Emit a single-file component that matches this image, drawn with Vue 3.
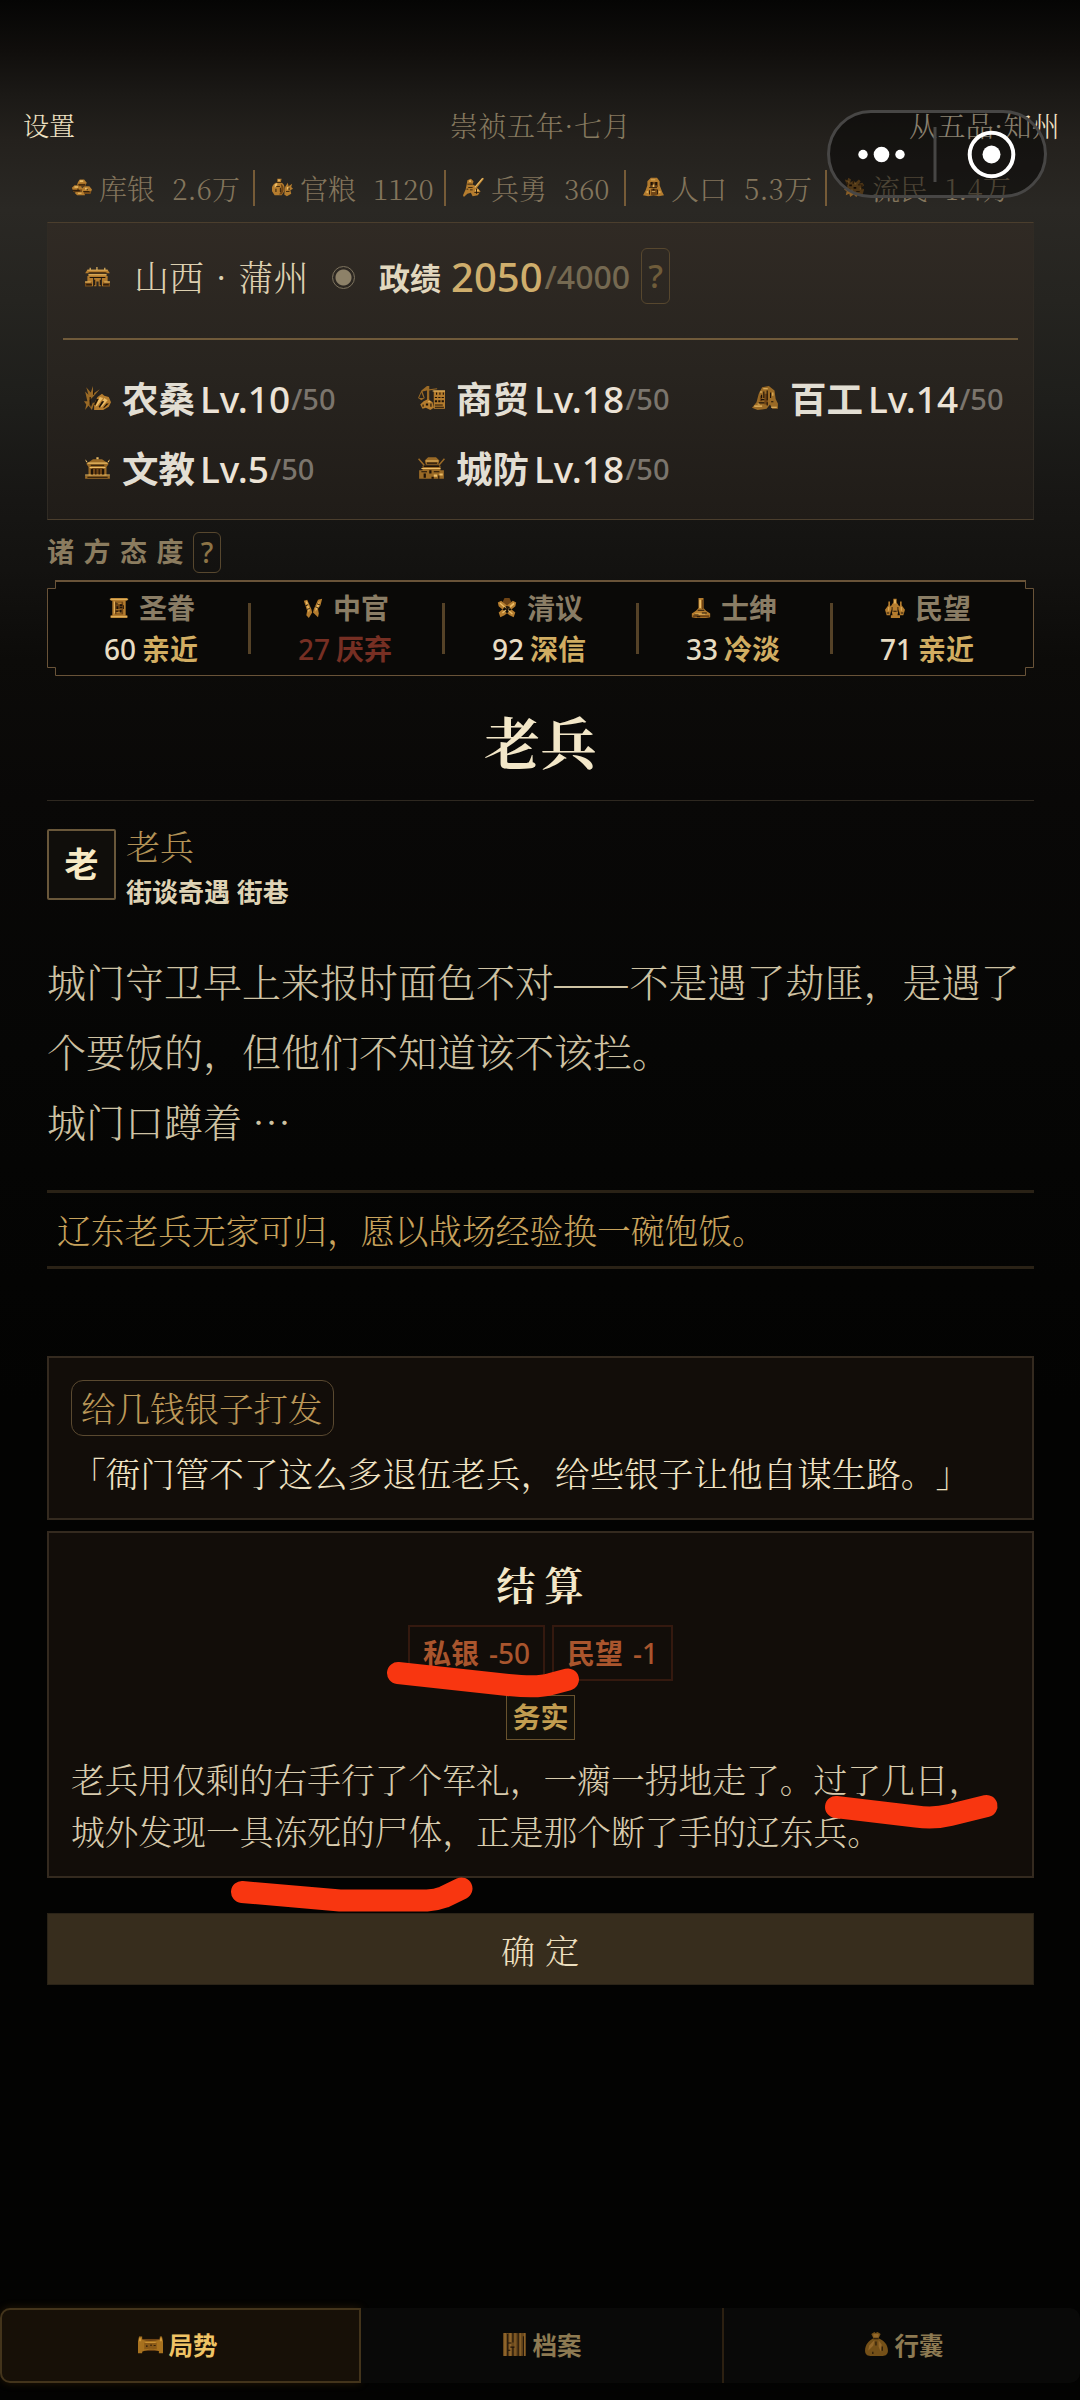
<script setup>
import { h } from 'vue'

const G = '#b47c2e'
const H = '#ecbd66'
const D = '#6f4415'
const K = '#1c1208'

// Each icon is a stack of [fill, path] layers on a 24x24 grid.
const shapes = {
  silver: [[G, 'M8 6 10 3h5l3 4-2 4H9L7 9zM1 13l3-3h7l2 4-2 4H3zM13 13l3-2h5l3 4-2 5h-7l-3-3zM4 19l4-2 7 1 1 4H7z'], [D, 'M9 8h8l-1 3H9zM2 15h11l-2 3H3zM14 17h9l-1 3h-7z'], [H, 'M10 4h4v2h-4zM4 11h4v2H4zM16 13h3v2h-3zM8 19h4v1H8z'], [K, 'M8 9h8v1H8zM2 16h8v1H2zM14 17h7v1h-7zM18 14h1v2h-1zM7 14h2v1H7z']],
  grain: [[G, 'M6 2h5l-1 4c4 2 5 6 4 11l-3 5H3l-3-5c-1-5 1-9 6-11zM15 12l3-5 1 4 4-3-1 4 2 2-3 2 1 4-5 3-3-2z'], [D, 'M10 8c3 2 4 5 3 9l-2 4H8c3-4 3-8 2-13z'], [H, 'M3 9l3-2v3l-3 3zM17 12h2v3h-2zM7 3h2v2H7z'], [K, 'M5 6h6v1H5zM5 11h4v1H5zM4 14h1v4H4zM9 13h1v5H9zM16 17h4v1h-4zM19 13h1v3h-1z']],
  soldier: [[G, 'M5 4l4-2 3 3-1 4 4 2 8-10 1 1-8 11 4 4-3 5-6 1-2-4-4 1-4 4-1-2 3-7 1-5z'], [H, 'M7 4h2v2H7zM22 1l1 1-9 11-1-1zM14 15h4v2h-4z'], [K, 'M5 8h6v1H5zM6 12h5v1H6zM13 18h6v1h-6zM15 14h1v6h-1zM8 15h3v1H8zM4 14h2v1H4z']],
  people: [[G, 'M9 1h7l3 4v5l3 8 2 4-6 1-6-1-6 1-6-1 3-6 2-6V5z'], [D, 'M8 6h9v6H8zM9 14h7v8H9z'], [H, 'M9 3h5v1H9zM4 17h2v2H4zM18 17h2v2h-2zM11 9h2v3h-2zM10 17h4v1h-4z'], [K, 'M9 6h2v4H9zM14 6h2v4h-2zM7 12h9v1H7zM11 14h2v2h-2zM7 16h1v5H7zM16 15h1v6h-1z']],
  refugee: [['#8a5f27', 'M1 3l3 1 1-3 3 2-1 4 4-3 2 3 4-4 2 2-2 3 4-1 2 3-3 3 3 2-2 7-4-2-3 4-3-3-4 3-1-4-4 2 1-5-3-2 4-3z'], ['#b8863c', 'M4 5h2v2H4zM12 7h2v2h-2zM8 15h2v2H8zM18 13h2v2h-2z'], [K, 'M6 9h3v2H6zM11 12h3v2h-3zM16 9h3v1h-3zM14 17h4v1h-4zM6 14h1v4H6zM10 4h1v4h-1zM3 6h1v4H3zM20 9h1v6h-1z']],
  gate: [[G, 'M3 4h18l2 4H1zM4 9h16v3H4zM3 11h5v11H1v-5h2zM16 11h5v6h2v5h-7zM9 13h6v9h-2v-5h-2v5H9z'], [D, 'M1 18h6v4H1zM17 18h6v4h-6zM5 7h14v1H5z'], [H, 'M3 4h18v1H3zM4 9h16v1H4zM1 17h5v1H1zM18 17h5v1h-5zM5 2h1v2H5zM11 1h1v3h-1zM18 2h1v2h-1z'], [K, 'M4 7h16v1H4zM5 12h14v1H5zM2 20h5v1H2zM17 20h5v1h-5zM9 15h1v6H9zM14 15h1v6h-1z']],
  farm: [['#9a6a26', 'M1 6l3 3-2-7 4 5 2-6v7l6-4-5 6-4 4 1 7 2-5 1 1-2 6-3-4-3 4 1-5-2-3h3z'], [G, 'M9 17l3-6 4-3 2 2 4 1 2 5-2 4-5 3H9z'], [H, 'M14 11l3 1-5 7-2 1zM18 12l3 2-5 6h-2z'], [K, 'M11 13l-2 5 1 1 3-6zM16 15l-3 5 1 1 4-6zM5 11h1v8H5zM8 6h1v3H8zM20 17l-3 4h1l4-4z']],
  trade: [['#9a6a26', 'M8 1h2v3l7-1v1l-7 1v12H8V5L4 6l2 6-3 2-3-2 3-7zM3 7l-2 5h4z'], [G, 'M14 5h10v17H14zM5 15l4-2 4 3 1 5-3 2-4-2-3 1-2-4z'], [K, 'M16 7h1v2h-1zM19 7h1v2h-1zM22 7h1v2h-1zM15 11h2v1h-2zM18 11h2v1h-2zM21 11h2v1h-2zM15 14h2v2h-2zM18 14h2v2h-2zM21 14h2v2h-2zM15 18h7v1h-7zM15 20h8v1h-8zM7 17h2v2H7zM4 18h1v2H4zM11 17h1v3h-1z'], [H, 'M9 15h2v1H9zM13 5h11v1H13z']],
  craft: [['#9a6a26', 'M9 2l6-1 5 4 1 8 2 4v5h-5l-2-4-3 4-8 1-5-2 4-5 2-8z'], [D, 'M11 8h3v10h-3zM7 10h2v5H7z'], [H, 'M10 3h4v1h-4zM7 6h2v1H7zM18 7h1v3h-1zM2 19h7v1H2zM17 20h5v1h-5zM5 17h2v1H5z'], [K, 'M10 6h1v6h-1zM13 5h1v9h-1zM16 7h1v5h-1zM8 13h3v1H8zM6 16h5v1H6zM13 16h1v3h-1zM17 15h2v1h-2zM8 9h1v3H8z']],
  school: [['#9a6a26', 'M2 8l6-4h8l6 4-2 3v8h3v3H1v-3h3v-8z'], [D, 'M7 12h10v7H7z'], [H, 'M3 7h18v1H3zM1 18h22v1H1zM5 11h14v1H5zM11 2h2v2h-2zM1 4l2 2-1 1zM23 4l-2 2 1 1z'], [K, 'M6 9h12v1H6zM6 13h2v5H6zM10 13h1v5h-1zM13 13h1v5h-1zM16 13h2v5h-2zM3 20h18v1H3z']],
  wall: [['#9a6a26', 'M6 5l3-3h7l3 3-1 4H7zM4 10h16v4h3v8H1v-8h3zM1 3l5 6-1 1-5-6zM23 3l1 1-5 6-1-1z'], [H, 'M7 5h11v1H7zM3 12h17v1H3zM14 18h3v2h-3zM19 17h3v2h-3z'], [K, 'M8 7h9v1H8zM5 10h14v1H5zM3 15h5v1H3zM5 17h2v4H5zM10 14h2v3h-2zM14 15h5v1h-5zM12 20h2v2h-2zM18 19h1v3h-1z']],
  scroll: [[G, 'M2 1h20v3h-2v16h2v3H2v-3h2V4H2z'], [D, 'M7 5h10v14H7z'], [G, 'M9 6h6v2H9zM8 13h7v1H8zM9 16h6v2H9z'], [H, 'M1 2h22v1H1zM2 21h20v1H2zM6 5h1v13H6z'], [K, 'M8 7h3v1H8zM13 8h3v2h-3zM9 10h2v3H9zM13 11h3v1h-3zM8 15h3v1H8zM13 14h2v3h-2zM17 9h1v4h-1z']],
  tally: [[G, 'M1 4l4-1 5 10 1 4-4 6-3-3 1-5zM23 2l-5 1-5 10-1 4 6 5 1-4-1-5 3-4z'], [H, 'M3 5l2 0 3 9-1 3zM20 4l-5 8v4l4-6z'], [K, 'M3 9l3-1v1l-3 1zM5 13l3-1v1l-3 1zM15 10l4 2v1l-4-2zM17 7l3 1v1l-3-1z']],
  debate: [[D, 'M9 1h6l2 4-2 5H9L7 5z'], [G, 'M1 6l4-2 17 13-2 5-5-2L2 10zM23 6l-4-2L2 17l2 5 5-2 13-10z'], [H, 'M4 6l15 12-1 1L3 7zM20 6L6 17l1 1L21 8z'], [K, 'M9 11l5 4-1 1-5-4zM14 10l2 1-5 4-1-1z']],
  gentry: [[G, 'M9 1h6v11l3 3 5 3v4l-5 1H6l-5-1v-4l5-3 3-3z'], [D, 'M13 3h2v10h-2zM2 20h20v2H2z'], [H, 'M10 3h2v9h-2zM5 18h12v1H5z'], [K, 'M8 14h8v1H8zM4 19h5v1H4zM13 17h6v1h-6zM7 21h4v1H7z']],
  crowd: [[G, 'M10 2h4v4l3 4-2 10h3v3H7v-3h2L7 10l3-4zM4 5h2v4l2 3-2 8H2l-2-6 4-5zM18 5h2v4l4 5-2 6h-4l-2-8 2-3z'], [H, 'M11 3h2v4h-2zM4 11h1v4H4zM19 11h1v4h-1z'], [K, 'M8 11h1v5H8zM15 11h1v5h-1zM10 15h4v1h-4zM2 17h3v1H2zM19 17h3v1h-3z']],
  situation: [[D, 'M3 5h18v15H3z'], ['#a8721f', 'M1 2h3v21H0V8zM21 2h2l1 6v15h-4zM4 6c5 2 11 2 17 0v15c-5-3-11-3-17 0z'], ['#8a5a18', 'M6 10h12v8c-4-1-8-1-12 0z'], ['#d39a3b', 'M1 4h2v4H1zM21 4h2v4h-2zM7 9h10v1H7z'], [K, 'M8 13h1v2H8zM12 12h1v2h-1zM15 13h2v1h-2z']],
  archive: [['#6a491d', 'M1 1h22v22H1z'], ['#8f652b', 'M2 1h2v22H2zM7 1h2v22H7zM12 1h1v22h-1zM17 1h1v22h-1zM21 1h1v22h-1z'], [K, 'M5 2h1v21H5zM10 1h1v9h-1zM10 15h1v8h-1zM15 1h1v22h-1zM20 4h1v19h-1zM6 10h3v1H6zM8 14h4v1H8zM6 17h2v1H6z']],
  bag: [['#745018', 'M7 2l3-2 1 1 2-1 3 2-2 4c5 2 9 6 9 12 0 3-2 5-5 5H6c-3 0-5-2-5-5 0-6 4-10 8-12z'], ['#94682a', 'M9 2h5v3H9zM5 13l5-5-1 5-5 5zM14 8l3 4-1 7-2-5z'], [K, 'M9 6h5v1H9zM11 9h1v4h-1zM17 14h1v4h-1zM8 19h1v2H8z']]
}

const Icon = (props) =>
  h('svg', { viewBox: '0 0 24 24', preserveAspectRatio: 'none', 'aria-hidden': 'true' },
    shapes[props.name].map(([fill, d]) => h('path', { fill, d })))
Icon.props = ['name']

const resources = [
  { icon: 'silver', label: '库银', value: '2.6万', w: 184 },
  { icon: 'grain', label: '官粮', value: '1120', w: 191 },
  { icon: 'soldier', label: '兵勇', value: '360', w: 180 },
  { icon: 'people', label: '人口', value: '5.3万', w: 201 },
  { icon: 'refugee', label: '流民', value: '1.4万', w: 190 }
]
const fields = [
  { icon: 'farm', label: '农桑', level: 10 },
  { icon: 'trade', label: '商贸', level: 18 },
  { icon: 'craft', label: '百工', level: 14 },
  { icon: 'school', label: '文教', level: 5 },
  { icon: 'wall', label: '城防', level: 18 }
]
const factions = [
  { icon: 'scroll', label: '圣眷', value: 60, mood: '亲近' },
  { icon: 'tally', label: '中官', value: 27, mood: '厌弃', bad: true },
  { icon: 'debate', label: '清议', value: 92, mood: '深信' },
  { icon: 'gentry', label: '士绅', value: 33, mood: '冷淡' },
  { icon: 'crowd', label: '民望', value: 71, mood: '亲近' }
]
const outcome = ['老兵用仅剩的右手行了个军礼，一瘸一拐地走了。过了几日，', '城外发现一具冻死的尸体，正是那个断了手的辽东兵。']
const tabs = [
  { icon: 'situation', label: '局势', active: true },
  { icon: 'archive', label: '档案' },
  { icon: 'bag', label: '行囊' }
]
</script>

<template>
  <div class="screen">
    <header class="topbar">
      <span class="settings">设置</span>
      <span class="date">崇祯五年·七月</span>
      <span class="rank">从五品·知州</span>
    </header>

    <div class="resources">
      <div v-for="r in resources" :key="r.label" class="res" :style="{ width: r.w + 'px' }">
        <Icon :name="r.icon" class="res-icon" />
        <span class="res-label">{{ r.label }}</span>
        <span class="res-value">{{ r.value }}</span>
      </div>
    </div>

    <section class="panel">
      <div class="place">
        <Icon name="gate" class="place-icon" />
        <span class="place-name">山西 · 蒲州</span>
        <i class="seal"></i>
        <b class="merit">政绩</b>
        <span class="score">2050</span>
        <span class="score-max">/4000</span>
        <span class="help help-lg">?</span>
      </div>
      <div class="levels">
        <div v-for="f in fields" :key="f.label" class="level">
          <Icon :name="f.icon" class="level-icon" />
          <b>{{ f.label }}</b>
          <span class="lv">Lv.{{ f.level }}</span>
          <span class="cap">/50</span>
        </div>
      </div>
    </section>

    <div class="attitude">
      <b>诸方态度</b>
      <span class="help">?</span>
    </div>

    <section class="factions">
      <svg class="frame" viewBox="0 0 987 97" aria-hidden="true">
        <path d="M8.5 1V8.5H.5V87.5H8.5V95.5H978.5V87.5H986.5V8.5H978.5V1" fill="#0a0907" stroke="#695338" />
        <path d="M8 1H979" stroke="#695338" stroke-width="2" />
      </svg>
      <div v-for="f in factions" :key="f.label" class="faction" :class="{ bad: f.bad }">
        <div class="f-head"><Icon :name="f.icon" class="f-icon" /><b>{{ f.label }}</b></div>
        <div class="f-body"><span>{{ f.value }}</span><b>{{ f.mood }}</b></div>
      </div>
    </section>

    <h1 class="title">老兵</h1>

    <div class="npc">
      <div class="avatar">老</div>
      <div class="npc-info">
        <span class="npc-name">老兵</span>
        <b class="npc-tag">街谈奇遇 街巷</b>
      </div>
    </div>

    <div class="story">
      <div>城门守卫早上来报时面色不对<span class="dash">——</span>不是遇了劫匪，是遇了</div>
      <div>个要饭的，但他们不知道该不该拦。</div>
      <div>城门口蹲着 …</div>
    </div>
    <div class="summary">辽东老兵无家可归，愿以战场经验换一碗饱饭。</div>

    <section class="card choice">
      <span class="chip">给几钱银子打发</span>
      <div class="quote">「衙门管不了这么多退伍老兵，给些银子让他自谋生路。」</div>
    </section>

    <section class="card result">
      <h2>结算</h2>
      <div class="effects">
        <div class="effect"><b>私银</b><span>-50</span></div>
        <div class="effect"><b>民望</b><span>-1</span></div>
      </div>
      <b class="trait">务实</b>
      <div class="outcome">
        <div v-for="line in outcome" :key="line">{{ line }}</div>
      </div>
    </section>

    <button class="confirm">确定</button>

    <nav class="tabs">
      <div v-for="t in tabs" :key="t.label" class="tab" :class="{ active: t.active }">
        <Icon :name="t.icon" class="tab-icon" />
        <b>{{ t.label }}</b>
      </div>
    </nav>

    <svg class="capsule" viewBox="0 0 220 88" aria-hidden="true">
      <rect x="1.5" y="1.5" width="217" height="85" rx="42.5" fill="#000" fill-opacity=".42" stroke="#474645" stroke-width="3" />
      <path d="M108 17V72" stroke="#474645" stroke-width="3" />
      <g fill="#fff">
        <circle cx="36" cy="44.5" r="4.7" /><circle cx="54.5" cy="44.5" r="7.8" /><circle cx="73" cy="44.5" r="4.7" />
        <circle cx="164.5" cy="44.5" r="9" />
      </g>
      <circle cx="164.5" cy="44.5" r="21.8" fill="none" stroke="#fff" stroke-width="4" />
    </svg>

    <svg class="marks" viewBox="0 0 1080 2400" aria-hidden="true">
      <path d="M398 1673L508 1685Q539 1688 551 1684L568 1679.500" />
      <path d="M836 1807L916 1816.500Q934 1819 950 1815L986.500 1806" />
      <path d="M242 1892L340 1900.500H427Q436 1900 444 1897L461.500 1888.500" />
    </svg>
  </div>
</template>

<style>
html, body { background: #030302; }
body { margin: 0; }
</style>

<style scoped>
.screen {
  --serif: "Noto Serif CJK SC", "Noto Serif SC", "Source Han Serif SC", "Noto Sans CJK SC", serif;
  --sans: "Noto Sans", "Noto Sans CJK SC", sans-serif;
  position: relative;
  width: 1080px;
  height: 2400px;
  overflow: hidden;
  display: flex;
  flex-direction: column;
  box-sizing: border-box;
  font-family: var(--sans);
  white-space: nowrap;
  text-spacing-trim: space-all;
  background: linear-gradient(#050504 0, #100e0c 50px, #1b1916 95px, #24211d 140px, #2a2824 210px, #252420 300px, #1e1e1b 400px, #171614 500px, #131210 570px, #0c0b09 660px, #090807 800px, #060605 1050px, #030302 1400px, #030302 100%);
}
.screen * { box-sizing: border-box; }
svg { display: block; flex: none; }

.topbar {
  height: 156px;
  padding: 94px 20px 0 23px;
  display: grid;
  grid-template-columns: 1fr auto 1fr;
  align-items: center;
  font-family: var(--serif);
  font-weight: 300;
  font-size: 28px;
  line-height: 60px;
}
.settings { font-size: 26px; color: #f0e3c4; }
.date { color: #85795f; letter-spacing: .6px; margin-left: -2px; }
.rank { color: #ecdfc0; text-align: right; letter-spacing: .3px; }

.resources { height: 66px; padding: 14px 0 16px 71px; display: flex; }
.res {
  height: 36px;
  display: flex;
  align-items: center;
  font: 300 28px/36px var(--serif);
  color: #83755c;
  flex: none;
  border-right: 2px solid #765b37;
}
.res + .res { padding-left: 17px; }
.res:last-child { border: 0; }
.res-icon { width: 21px; height: 20px; margin-top: -3px; }
.res-label { margin-left: 7px; }
.res-value { margin-left: 17px; }

.panel {
  height: 298px;
  margin: 0 46px 0 47px;
  padding: 0 15px;
  border: 1px solid #4b3e2d;
  border-left-color: #302b24;
  border-right-color: #302b24;
  background: linear-gradient(#302a24, #28241f 50%, #201c18);
}
.place {
  height: 117px;
  padding: 0 0 9px 21px;
  border-bottom: 2px solid #705a3a;
  display: flex;
  align-items: center;
}
.place-icon { width: 27px; height: 22px; margin-top: 2px; }
.place-name { margin-left: 23px; width: 174px; font: 300 35px/50px var(--serif); word-spacing: 2.5px; color: #ddd0b0; }
.seal {
  width: 23px;
  height: 23px;
  margin: 2px 0 0 24px;
  border: 1px solid #7d735e;
  border-radius: 50%;
  background: radial-gradient(circle, #8d8168 0 7.5px, transparent 8.5px);
}
.merit { margin-left: 24px; font-size: 31px; color: #e2d8bf; }
.score { margin-left: 10px; font-size: 40px; font-weight: 500; color: #cfae6c; }
.score-max { margin-left: 2px; font-size: 32px; font-weight: 500; color: #756951; }
.help {
  width: 28px;
  height: 41px;
  border: 1px solid #57472e;
  border-radius: 6px;
  color: #8d7446;
  font: 500 28px/39px var(--sans);
  text-align: center;
}
.help-lg { width: 29px; height: 56px; margin-left: 11px; font-size: 33px; line-height: 54px; color: #6f5c3a; }
.levels { padding: 24px 0 0 21px; display: grid; grid-template-columns: 334px 334px 250px; grid-auto-rows: 70px; }
.level { display: flex; align-items: center; color: #e2ded3; }
.level-icon { width: 27px; height: 26px; margin-top: -2px; }
.level b { margin-left: 11px; font-size: 36.5px; line-height: 50px; }
.lv { margin-left: 5px; font-size: 37px; font-weight: 500; line-height: 50px; color: #ece3d6; }
.cap { margin-left: 1px; font-size: 29px; line-height: 50px; font-weight: 500; color: #7b756d; }

.attitude { height: 60px; padding: 12px 0 0 47px; display: flex; align-items: flex-start; color: #8b7c5f; }
.attitude b { width: 146px; font-size: 27px; line-height: 40px; letter-spacing: 9.5px; }

.factions { position: relative; height: 97px; margin: 0 46px 0 47px; padding: 0 7px; display: flex; }
.frame { position: absolute; left: 0; top: 0; width: 987px; height: 97px; fill: none; }
.faction {
  position: relative;
  width: 194px;
  padding-top: 8px;
  display: flex;
  flex-direction: column;
  align-items: center;
}
.faction + .faction::before {
  content: "";
  position: absolute;
  left: 0;
  top: 23px;
  width: 3px;
  height: 51px;
  background: #554227;
}
.f-head, .f-body { display: flex; align-items: center; height: 40px; font-size: 28px; line-height: 40px; }
.f-body { height: 42px; }
.f-head { color: #8a7d65; padding-left: 2px; }
.f-head b { margin-left: 10px; font-size: 28px; }
.f-icon { width: 20px; height: 22px; }
.f-body span { color: #e7dcc3; font-weight: 500; }
.f-body b { margin-left: 6px; color: #d1ad62; }
.bad .f-body span, .bad .f-body b { color: #762f23; }

.title {
  height: 124px;
  margin: 0 46px 0 47px;
  padding-top: 23px;
  border-bottom: 1px solid #2e2820;
  font: 700 56.25px/80px var(--serif);
  color: #f3e7c8;
  text-align: center;
}
.npc { height: 100px; padding: 28px 0 0 47px; display: flex; }
.avatar {
  width: 69px;
  height: 71px;
  border: 2px solid #69573a;
  background: #100e0b;
  border-radius: 2px;
  color: #f7e9c4;
  font-weight: 700;
  font-size: 34px;
  line-height: 67px;
  text-align: center;
}
.npc-info { margin-left: 10px; margin-top: -3px; display: flex; flex-direction: column; }
.npc-name { font: 300 34px/40px var(--serif); color: #b29256; }
.npc-tag { font-size: 26px; line-height: 40px; margin-top: 6px; color: #dfd3b5; }

.story { height: 289px; padding: 44px 0 0 47px; font: 300 39px/70px var(--serif); color: #cec2a3; }
.story > div { height: 70px; }
.dash {
  display: inline-block;
  margin-right: 10px;
  transform: translateX(-2px) scaleX(1.19);
  transform-origin: left;
}
.summary {
  height: 79px;
  margin: 0 46px 0 47px;
  padding-left: 10px;
  border-top: 3px solid #2a2216;
  border-bottom: 3px solid #2a2216;
  font: 300 33.75px/73px var(--serif);
  color: #c7a25c;
}

.card { margin: 0 46px 0 47px; border: 2px solid #342a1f; background: #120d09; }
.choice { height: 164px; margin-top: 87px; padding: 22px; }
.chip {
  display: block;
  width: 263px;
  height: 56px;
  padding-left: 9px;
  border: 1px solid #5a4930;
  border-radius: 12px;
  font: 300 34.5px/52px var(--serif);
  color: #bc9858;
}
.quote { margin-top: 11px; font: 300 34.6px/50px var(--serif); color: #f0e3c4; }

.result { height: 347px; margin-top: 11px; padding: 25px 22px 0; display: flex; flex-direction: column; align-items: center; }
h2 { margin: 0; font: 700 39px/50px var(--serif); letter-spacing: 9px; padding-left: 8px; color: #f3e7c8; }
.effects { margin-top: 17px; display: flex; gap: 7px; }
.effect {
  height: 56px;
  padding: 0 13px 0 13px;
  display: flex;
  gap: 10px;
  border: 2px solid #34190f;
  color: #a9552d;
  font-size: 28px;
  font-weight: 500;
  line-height: 53px;
}
.trait { width: 69px; height: 45px; margin-top: 14px; border: 1px solid #68522e; font-size: 28px; line-height: 43px; text-align: center; color: #c29d50; background: #14110a; }
.outcome { align-self: stretch; margin-top: 13px; font: 300 33.75px/52px var(--serif); color: #d8cbad; }

.confirm {
  width: 987px;
  height: 72px;
  margin: 35px 0 0 47px;
  padding: 2px 0 0 9px;
  border: 1px solid #2a2317;
  background: #372d1d;
  font: 300 34px/68px var(--serif);
  letter-spacing: 10px;
  color: #ecdfbf;
}

.tabs { margin-top: auto; margin-bottom: 17px; height: 75px; display: grid; grid-template-columns: 361px 363px 356px; flex: none; }
.tab {
  display: flex;
  align-items: center;
  justify-content: center;
  border-right: 2px solid #2c2011;
  background: #090908;
  color: #8d7a52;
  font-size: 24.5px;
}
.tab:last-child { border-right: 0; border-radius: 0 10px 10px 0; padding-left: 3px; }
.tab b { margin-left: 6px; margin-top: -3px; }
.tab.active {
  padding-right: 6px;
  color: #efc365;
  background: #171007;
  border: 2px solid #43341b;
  border-radius: 10px 0 0 10px;
  box-shadow: 0 0 8px rgba(120, 75, 20, .3);
}
.tab-icon { width: 25px; height: 25px; margin-top: -2px; }
.active .tab-icon { height: 19px; }

.capsule { position: absolute; left: 827px; top: 110px; width: 220px; height: 88px; }
.marks { position: absolute; left: 0; top: 0; width: 1080px; height: 2400px; pointer-events: none; }
.marks path { fill: none; stroke: #f83610; stroke-width: 22; stroke-linecap: round; stroke-linejoin: round; }
</style>
